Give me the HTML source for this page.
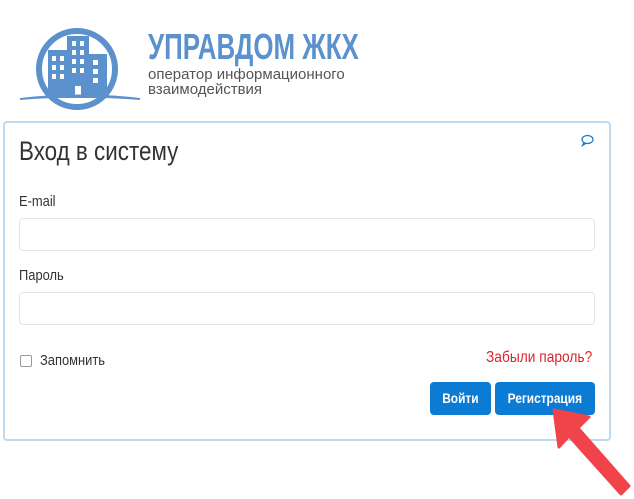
<!DOCTYPE html>
<html><head><meta charset="utf-8"><style>
body{margin:0;width:634px;height:499px;background:#fff;font-family:"Liberation Sans",sans-serif;position:relative;overflow:hidden;color:#333}
.abs{position:absolute}
.n{transform:scaleX(0.86);transform-origin:left}
.panel{left:3px;top:121px;width:608px;height:320px;border:2px solid #bcdaf2;border-radius:4px;box-sizing:border-box}
.inp{left:19px;width:576px;height:33px;border:1px solid #e2e6ea;border-radius:4px;box-sizing:border-box}
.btn{top:382px;height:33px;background:#0c7bd4;color:#fff;border-radius:4px;font-size:14px;font-weight:bold;line-height:33px;text-align:center}
.btn span{display:inline-block;transform:scaleX(0.85)}
</style></head><body>
<svg class="abs" style="left:20px;top:20px" width="120" height="90" viewBox="0 0 120 90">
<circle cx="57" cy="49" r="38" fill="none" stroke="#5b91cc" stroke-width="6"/>
<rect x="47" y="16" width="22" height="62" fill="#5b91cc"/>
<rect x="28" y="30" width="21" height="48" fill="#5b91cc"/>
<rect x="69" y="34" width="18" height="44" fill="#5b91cc"/>
<g fill="#fff">
<rect x="52" y="21" width="4" height="5"/><rect x="60" y="21" width="4" height="5"/>
<rect x="52" y="30" width="4" height="5"/><rect x="60" y="30" width="4" height="5"/>
<rect x="52" y="39" width="4" height="5"/><rect x="60" y="39" width="4" height="5"/>
<rect x="52" y="48" width="4" height="5"/><rect x="60" y="48" width="4" height="5"/>
<rect x="32" y="36" width="4" height="5"/><rect x="40" y="36" width="4" height="5"/>
<rect x="32" y="45" width="4" height="5"/><rect x="40" y="45" width="4" height="5"/>
<rect x="32" y="54" width="4" height="5"/><rect x="40" y="54" width="4" height="5"/>
<rect x="73" y="40" width="5" height="5"/><rect x="73" y="49" width="5" height="5"/><rect x="73" y="58" width="5" height="5"/>
<rect x="55" y="66" width="6" height="9"/>
</g>
<path d="M0 78 Q60 71 120 78 L120 80 Q60 75 0 80Z" fill="#5b91cc"/>
</svg>
<div class="abs" style="left:148px;top:28px;font-size:36px;font-weight:bold;color:#5b91cc;transform:scaleX(0.72);transform-origin:left;line-height:38px">УПРАВДОМ ЖКХ</div>
<div class="abs" style="left:148px;top:67px;font-size:15px;color:#555;line-height:15px">оператор информационного<br>взаимодействия</div>
<div class="abs panel"></div>
<div class="abs" style="left:19px;top:136px;font-size:27px;color:#333;transform:scaleX(0.83);transform-origin:left">Вход в систему</div>
<svg class="abs" style="left:580px;top:134px" width="14" height="13" viewBox="0 0 14 13"><ellipse cx="7.5" cy="5.5" rx="5.5" ry="4" fill="none" stroke="#0c7bd4" stroke-width="1.2"/><path d="M4 8.5 L2.5 11.5 L6 9.3" fill="none" stroke="#0c7bd4" stroke-width="1.2"/></svg>
<div class="abs n" style="left:19px;top:193px;font-size:15px">E-mail</div>
<div class="abs inp" style="top:218px"></div>
<div class="abs n" style="left:19px;top:267px;font-size:15px">Пароль</div>
<div class="abs inp" style="top:292px"></div>
<div class="abs" style="left:20px;top:355px;width:12px;height:12px;border:1px solid #999;border-radius:2px;box-sizing:border-box"></div>
<div class="abs n" style="left:40px;top:352px;font-size:15px">Запомнить</div>
<div class="abs n" style="left:486px;top:349px;font-size:16px;color:#d9262c">Забыли пароль?</div>
<div class="abs btn" style="left:430px;width:61px"><span>Войти</span></div>
<div class="abs btn" style="left:495px;width:100px"><span>Регистрация</span></div>
<svg class="abs" style="left:545px;top:405px" width="89" height="94" viewBox="0 0 89 94">
<path d="M9 5 L44 12 L33 23 L84 81 L76 89 L24 31 L14 42 Z" fill="#f0444a" stroke="#f0444a" stroke-width="3" stroke-linejoin="round"/>
</svg>
</body></html>
